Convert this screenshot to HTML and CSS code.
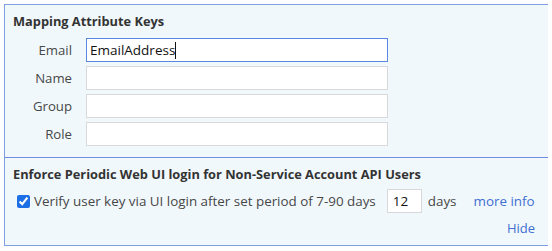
FILE: index.html
```html
<html>
<head>
    <link rel="stylesheet" href="styles.css">
</head>
<body>
    <div id="settingsPanel">
        <div class="section">
            <div class="sectionTitle">Mapping Attribute Keys</div>
            <div class="mappingGrid">
                <label class="fieldLabel" for="keyEmail">Email</label>
                <input class="textField focused" type="text" id="keyEmail" value="EmailAddress"><span class="caret"></span>
                <label class="fieldLabel" for="keyName">Name</label>
                <input class="textField" type="text" id="keyName">
                <label class="fieldLabel" for="keyGroup">Group</label>
                <input class="textField" type="text" id="keyGroup">
                <label class="fieldLabel" for="keyRole">Role</label>
                <input class="textField" type="text" id="keyRole">
            </div>
        </div>
        <div class="section sectionLast">
            <div class="sectionTitle">Enforce Periodic Web UI login for Non-Service Account API Users</div>
            <div class="verifyRow">
                <input class="checkBox" type="checkbox" id="verifyKey" checked>
                <label for="verifyKey">Verify user key via UI login after set period of 7-90 days</label>
                <input class="daysField" type="text" value="12">
                <span class="daysUnit">days</span>
                <a class="link moreInfo" href="#">more info</a>
            </div>
            <div class="hideRow">
                <a class="link" href="#">Hide</a>
            </div>
        </div>
    </div>
</body>
</html>
```

FILE: styles.css
```css
body {
    margin: 4px;
    font-family: "Open Sans", "Noto Sans", sans-serif;
    font-size: 13px;
    color: #444444;
}

#settingsPanel {
    width: 545px;
    box-sizing: border-box;
    border: 1px solid #7f9fe2;
    background-color: #f1f8fc;
}

.section {
    padding: 7px 8px 11px 8px;
    border-bottom: 1px solid #6f8fdc;
}

.sectionLast {
    border-bottom: none;
    padding-bottom: 8px;
}

.sectionTitle {
    font-weight: bold;
    font-size: 12.8px;
    color: #333333;
    line-height: 18px;
    white-space: nowrap;
}

.mappingGrid {
    display: grid;
    grid-template-columns: 59px 302px;
    column-gap: 14px;
    row-gap: 4px;
    margin-top: 8px;
    align-items: center;
    position: relative;
}

.fieldLabel {
    text-align: right;
    color: #474747;
    font-size: 13.2px;
}

.textField {
    height: 24px;
    box-sizing: border-box;
    border: 1px solid #d9d9d9;
    background-color: #ffffff;
    font-family: "Open Sans", sans-serif;
    font-size: 13.5px;
    color: #111111;
    padding: 0 3px;
    margin: 0;
    outline: none;
}

.focused {
    border: 1px solid #5c87e0;
}

.caret {
    position: absolute;
    left: 162px;
    top: 4px;
    width: 1px;
    height: 17px;
    background-color: #111111;
}

.verifyRow {
    display: flex;
    align-items: center;
    margin-top: 6px;
    font-size: 13.4px;
    color: #474747;
    white-space: nowrap;
}

.checkBox {
    margin: 0 4px 0 4px;
    width: 13px;
    height: 13px;
    accent-color: #1d6fe6;
}

.daysField {
    width: 35px;
    height: 24px;
    box-sizing: border-box;
    border: 1px solid #d9d9d9;
    background-color: #ffffff;
    font-family: "Open Sans", sans-serif;
    font-size: 13.5px;
    color: #111111;
    padding: 0 5px;
    margin: 0 6px 0 11px;
    outline: none;
}

.daysUnit {
    margin-right: 17px;
}

.link {
    color: #3f6fd1;
    text-decoration: none;
}

.hideRow {
    text-align: right;
    margin-top: 6px;
    padding-right: 5px;
    line-height: 18px;
}
```
